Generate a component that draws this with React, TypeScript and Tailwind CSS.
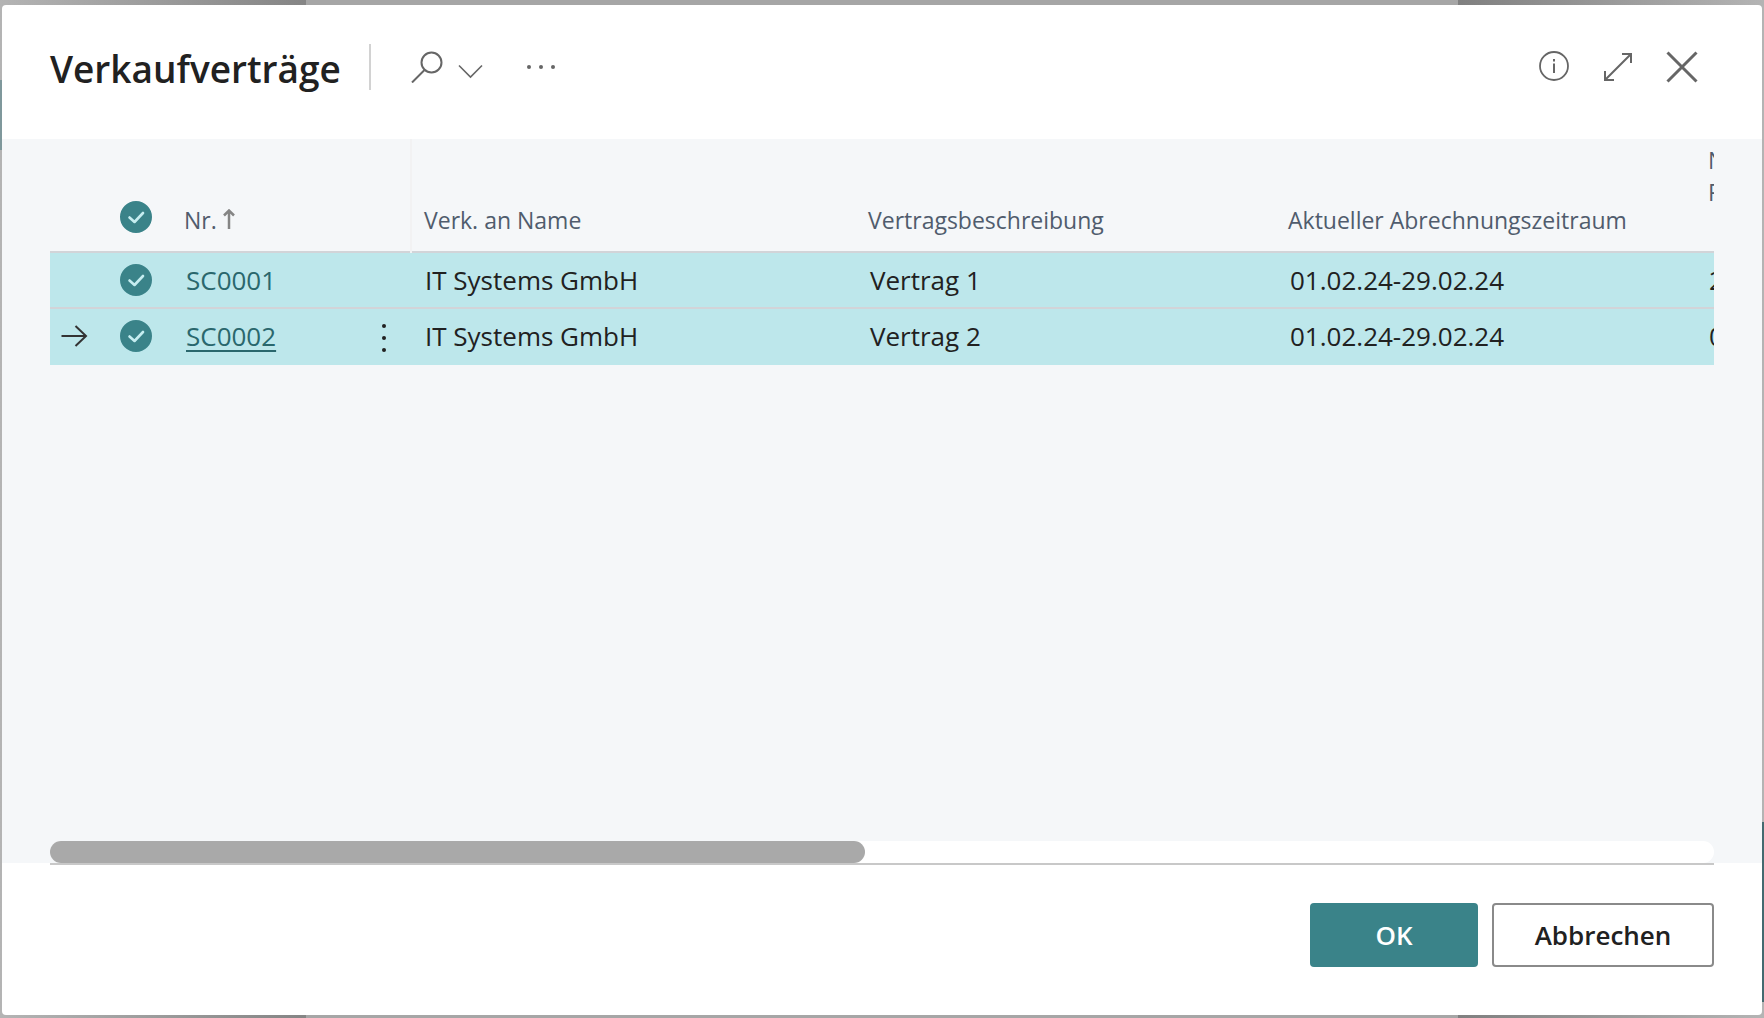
import { FC, ReactNode, useState } from "react";

interface Contract {
  no: string;
  customer: string;
  description: string;
  period: string;
  next: string;
}

const contracts: Contract[] = [
  { no: "SC0001", customer: "IT Systems GmbH", description: "Vertrag 1", period: "01.02.24-29.02.24", next: "29.02.24" },
  { no: "SC0002", customer: "IT Systems GmbH", description: "Vertrag 2", period: "01.02.24-29.02.24", next: "01.02.24" },
];

interface IconButtonProps {
  label: string;
  children: ReactNode;
}

const IconButton: FC<IconButtonProps> = ({ label, children }) => (
  <button type="button" aria-label={label} className="flex h-8 w-8 items-center justify-center text-[#666]">
    {children}
  </button>
);

interface RowCheckProps {
  label: string;
  checked: boolean;
  onChange: () => void;
}

const RowCheck: FC<RowCheckProps> = ({ label, checked, onChange }) => (
  <label className="mx-auto grid h-8 w-8 cursor-pointer">
    <input
      type="checkbox"
      aria-label={label}
      checked={checked}
      onChange={onChange}
      className="col-start-1 row-start-1 h-8 w-8 appearance-none rounded-full border-2 border-[#3a8389] checked:bg-[#3a8389]"
    />
    {checked && (
      <svg viewBox="0 0 32 32" className="pointer-events-none col-start-1 row-start-1 h-8 w-8" fill="none" stroke="#c5edf0" strokeWidth="2.6">
        <path d="M9.500 16.500l5 4.500 8.500-9" strokeLinecap="round" strokeLinejoin="round" />
      </svg>
    )}
  </label>
);

const headCell = "overflow-hidden pb-[15px] text-left align-bottom text-[23px] leading-8 font-normal whitespace-nowrap text-[#505c6d]";
const cell = "overflow-hidden whitespace-nowrap";

const App: FC = () => {
  const [selected, setSelected] = useState<string[]>(contracts.map((c) => c.no));
  const current = "SC0002";
  const allSelected = selected.length === contracts.length;

  const toggle = (no: string) => {
    setSelected((prev) => (prev.includes(no) ? prev.filter((n) => n !== no) : [...prev, no]));
  };

  return (
    <div className="relative flex min-h-screen flex-col bg-[#a6a6a6] px-0.5 pt-[5px] pb-[3px] font-['Open_Sans','Noto_Sans',sans-serif] text-[#212121]">
      {/* Dimmed page behind the dialog */}
      <div className="absolute inset-0 flex justify-between">
        <div className="w-[306px] bg-linear-to-r from-[#b4b4b4] to-[#858585] pt-20">
          <div className="h-[70px] w-2 bg-[#7f989c]" />
        </div>
        <div className="flex w-[306px] flex-col items-end justify-end bg-linear-to-r from-[#808080] to-[#b4b4b4] pb-4">
          <div className="h-[180px] w-2 bg-[#446a70]" />
        </div>
      </div>

      <div role="dialog" aria-labelledby="dialog-title" className="relative flex grow flex-col overflow-hidden rounded bg-white">
        <header className="flex h-[134px] items-start px-12 pt-[39px]">
          <h1 id="dialog-title" className="-mt-0.5 text-[37px] leading-[54px] font-semibold">
            Verkaufverträge
          </h1>
          <div className="ml-7 h-[46px] w-0.5 bg-[#d2d2d2]" />
          <div className="ml-10 flex pt-[7px]">
            <IconButton label="Suchen">
              <svg viewBox="0 0 32 32" className="h-8 w-8" fill="none" stroke="currentColor" strokeWidth="2">
                <circle cx="20.5" cy="11.5" r="10" />
                <path d="M13.5 19L1 31.500" />
              </svg>
            </IconButton>
            <button type="button" aria-label="Suchoptionen" className="ml-3 flex h-8 w-8 items-center justify-center text-[#666]">
              <svg viewBox="0 0 32 32" className="h-8 w-8" fill="none" stroke="currentColor" strokeWidth="1.6">
                <path d="M4 14.500l11.500 11.500L27 14.500" />
              </svg>
            </button>
            <button type="button" aria-label="Weitere Optionen" className="ml-[38px] flex h-8 w-8 items-center justify-center text-[#666]">
              <svg viewBox="0 0 32 32" className="h-8 w-8" fill="currentColor">
                <circle cx="4" cy="16" r="2" />
                <circle cx="16" cy="16" r="2" />
                <circle cx="28" cy="16" r="2" />
              </svg>
            </button>
          </div>
          <div className="mr-4 ml-auto flex gap-8 pt-[7px]">
            <IconButton label="Info">
              <svg viewBox="0 0 32 32" className="h-8 w-8" fill="none" stroke="currentColor" strokeWidth="1.8">
                <circle cx="16" cy="15" r="14" />
                <path d="M16 12.500v9.500M16 8v2.500" strokeWidth="2" />
              </svg>
            </IconButton>
            <IconButton label="Vergrößern">
              <svg viewBox="0 0 32 32" className="h-8 w-8" fill="none" stroke="currentColor" strokeWidth="2">
                <path d="M3 29L29 3M20 3H29v9M3 20V29h9" />
              </svg>
            </IconButton>
            <IconButton label="Schließen">
              <svg viewBox="0 0 32 32" className="h-8 w-8" fill="none" stroke="currentColor" strokeWidth="3">
                <path d="M1.500 1.500l29 29M30.500 1.500l-29 29" />
              </svg>
            </IconButton>
          </div>
        </header>

        <main className="flex grow flex-col bg-[#f5f7f9] px-12">
          <div className="grow overflow-hidden">
            <table className="w-full table-fixed border-collapse">
              <colgroup>
                <col className="w-[50px]" />
                <col className="w-[72px]" />
                <col className="w-[184px]" />
                <col className="w-[55px]" />
                <col />
                <col className="w-[420px]" />
                <col className="w-[421px]" />
                <col className="w-[17px]" />
              </colgroup>
              <thead>
                <tr className="h-[113px] border-b-2 border-[#d2d4d8]">
                  <th className="p-0" />
                  <th className="pb-[18px] align-bottom font-normal">
                    <RowCheck
                      label="Alle auswählen"
                      checked={allSelected}
                      onChange={() => setSelected(allSelected ? [] : contracts.map((c) => c.no))}
                    />
                  </th>
                  <th className={`${headCell} pl-3`} aria-sort="ascending">
                    <span className="flex items-center gap-1.5">
                      Nr.
                      <svg viewBox="0 0 12 22" className="h-[22px] w-3" fill="none" stroke="#858585" strokeWidth="2.500">
                        <path d="M6 20V1M1 6.500l5-5 5 5" />
                      </svg>
                    </span>
                  </th>
                  <th className="border-r-2 border-[#f2f2f3] p-0" />
                  <th className={`${headCell} pl-3`}>Verk. an Name</th>
                  <th className={`${headCell} pl-3`}>Vertragsbeschreibung</th>
                  <th className={`${headCell} pl-3`}>Aktueller Abrechnungszeitraum</th>
                  <th className={`${headCell} pl-[11px]`}>
                    <span className="block pb-7">
                      Nächste
                      <br />
                      Rechnung
                    </span>
                  </th>
                </tr>
              </thead>
              <tbody className="text-[26px] leading-[54px]">
                {contracts.map((c) => (
                  <tr key={c.no} className="h-14 border-b-2 border-[#d2d4d8] bg-[#bde7eb] last:border-[#bde7eb]">
                    <td className="p-0">
                      {c.no === current && (
                        <svg viewBox="0 0 28 24" className="ml-2.5 h-6 w-7" fill="none" stroke="#333" strokeWidth="2">
                          <path d="M1.500 12h24M15.500 2l10.500 10-10.500 10" />
                        </svg>
                      )}
                    </td>
                    <td className="p-0">
                      <RowCheck label={`${c.no} auswählen`} checked={selected.includes(c.no)} onChange={() => toggle(c.no)} />
                    </td>
                    <td className={`${cell} pl-3.5`}>
                      <a href={`#${c.no}`} className={`text-[#2a676d] underline-offset-4 ${c.no === current ? "underline decoration-2" : ""}`}>
                        {c.no}
                      </a>
                    </td>
                    <td className="p-0">
                      {c.no === current && (
                        <button type="button" aria-label="Weitere Optionen anzeigen" className="ml-3 flex h-8 w-8 items-center justify-center">
                          <svg viewBox="0 0 8 32" className="h-8 w-2" fill="#212121">
                            <circle cx="4" cy="6" r="2" />
                            <circle cx="4" cy="18" r="2" />
                            <circle cx="4" cy="30" r="2" />
                          </svg>
                        </button>
                      )}
                    </td>
                    <td className={`${cell} pl-3.5`}>{c.customer}</td>
                    <td className={`${cell} pl-3.5`}>{c.description}</td>
                    <td className={`${cell} pl-3.5`}>{c.period}</td>
                    <td className={`${cell} pl-3`}>{c.next}</td>
                  </tr>
                ))}
              </tbody>
            </table>
          </div>

          {/* Horizontal scrollbar */}
          <div className="h-[22px] rounded-full bg-white">
            <div className="h-full w-[49%] rounded-full bg-[#a9a9a9]" />
          </div>
        </main>

        <footer className="flex h-[152px] flex-col px-12">
          <div className="h-0.5 bg-[#c8c8c8]" />
          <div className="flex justify-end gap-3.5 pt-[38px] text-[26px] font-semibold">
            <button type="button" className="h-16 w-[168px] rounded bg-[#3a8389] text-white">
              OK
            </button>
            <button type="button" className="h-16 w-[222px] rounded border-2 border-[#8a8a8a] bg-white">
              Abbrechen
            </button>
          </div>
        </footer>
      </div>
    </div>
  );
};

export default App;
